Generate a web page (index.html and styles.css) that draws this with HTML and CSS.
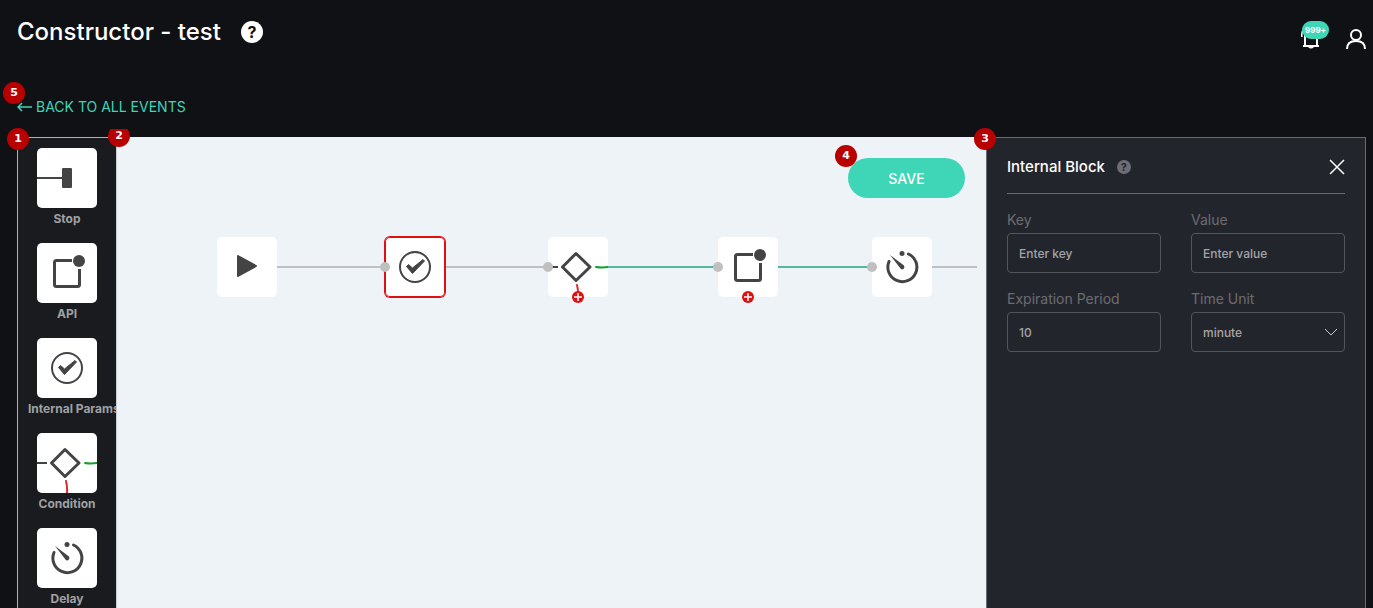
FILE: index.html
```
<!DOCTYPE html>
<html lang="en">
<head>
  <meta charset="UTF-8">
  <title>Constructor - test</title>
  <meta name="viewport" content="width=device-width, initial-scale=1">
  <link rel="stylesheet" href="styles.css">
</head>
<body>
  <!-- Block icons, shared by the palette and the canvas -->
  <svg class="sprite" aria-hidden="true">
    <symbol id="icon-stop" viewBox="0 0 60 60">
      <path d="M0 30h26" stroke="#444" stroke-width="2"/>
      <rect x="25" y="20" width="10" height="20" rx="1" fill="#444"/>
    </symbol>
    <symbol id="icon-play" viewBox="0 0 60 60">
      <path d="M21 19L39 29L21 39Z" fill="#444" stroke="#444" stroke-width="2" stroke-linejoin="round"/>
    </symbol>
    <symbol id="icon-api" viewBox="0 0 60 60">
      <path d="M35 17.500H19.500Q17.500 17.500 17.500 19.500V41.500Q17.500 43.500 19.500 43.500H40.500Q42.500 43.500 42.500 41.500V26" fill="none" stroke="#444" stroke-width="3"/>
      <circle cx="42" cy="18" r="6" fill="#444"/>
    </symbol>
    <symbol id="icon-check" viewBox="0 0 60 60">
      <circle cx="30" cy="30" r="15" fill="none" stroke="#444" stroke-width="2"/>
      <path d="M21.500 29.500L23.500 27.500L27.500 31L38 22.500L39.500 24L27.500 36.500Z" fill="#444" stroke="#444" stroke-linejoin="round"/>
    </symbol>
    <symbol id="icon-condition" viewBox="0 0 60 60">
      <path d="M0 30h10" stroke="#444" stroke-width="2"/>
      <path d="M28 16.500L42 30L28 43.500L14.500 30Z" fill="none" stroke="#444" stroke-width="3" stroke-linejoin="round"/>
      <path d="M48 30Q54 31 60 30" fill="none" stroke="#189f2b" stroke-width="2" stroke-linecap="round"/>
      <path d="M29 48Q30.500 54 30 60" fill="none" stroke="#dc2b2b" stroke-width="2" stroke-linecap="round"/>
    </symbol>
    <symbol id="icon-delay" viewBox="0 0 60 60">
      <path d="M17 24.500A14.500 14.500 0 1 0 36.500 17" fill="none" stroke="#444" stroke-width="3" stroke-linecap="round"/>
      <circle cx="30" cy="16.500" r="2.500" fill="#444"/>
      <path d="M18 18L32 28.500Q33 30.500 31.500 32Q30 33 28.500 31.500Z" fill="#444"/>
    </symbol>
  </svg>

  <header class="header">
    <h1 class="title">Constructor - test</h1>
    <button class="help" aria-label="Help">?</button>
    <div class="header-actions">
      <button class="icon-button bell" aria-label="Notifications">
        <svg width="22" height="26" viewBox="0 0 22 26" fill="none" stroke="#fff" stroke-width="2">
          <path d="M5 21V9Q5 2 11 2T17 9V21M3 22H19"/>
          <path d="M2 13Q1 8 4 5" stroke-width="1.500"/>
          <path d="M8 23Q11 26 14 23Z" fill="#fff" stroke="none"/>
        </svg>
        <span class="bell-count">999+</span>
      </button>
      <button class="icon-button" aria-label="Account">
        <svg width="22" height="22" viewBox="0 0 22 22" fill="none" stroke="#fff" stroke-width="2">
          <circle cx="11" cy="7" r="5"/>
          <path d="M2 21Q2 13 11 13T20 21"/>
        </svg>
      </button>
    </div>
  </header>

  <nav class="back">
    <a class="back-link" href="#">
      <svg width="15" height="10" viewBox="0 0 15 10" fill="none" stroke="currentColor">
        <path d="M15 5H1M5 1L1 5L5 9" stroke-width="1.500"/>
      </svg>
      BACK TO ALL EVENTS
    </a>
    <span class="marker marker-back">5</span>
  </nav>

  <main class="workspace">
    <aside class="palette">
      <span class="marker marker-palette">1</span>
      <ul class="palette-list">
        <li class="palette-item"><svg class="tile"><use href="#icon-stop"/></svg><span>Stop</span></li>
        <li class="palette-item"><svg class="tile"><use href="#icon-api"/></svg><span>API</span></li>
        <li class="palette-item"><svg class="tile"><use href="#icon-check"/></svg><span>Internal Params</span></li>
        <li class="palette-item"><svg class="tile"><use href="#icon-condition"/></svg><span>Condition</span></li>
        <li class="palette-item"><svg class="tile"><use href="#icon-delay"/></svg><span>Delay</span></li>
      </ul>
    </aside>

    <section class="canvas">
      <span class="marker marker-canvas">2</span>
      <div class="toolbar">
        <span class="marker marker-save">4</span>
        <button class="save">SAVE</button>
      </div>

      <div class="edge edge-start"></div>
      <div class="edge edge-check"></div>
      <div class="edge edge-condition"></div>
      <div class="edge edge-api"></div>
      <div class="edge edge-delay"></div>

      <div class="node node-start"><svg class="tile"><use href="#icon-play"/></svg></div>
      <div class="node node-check"><svg class="tile selected"><use href="#icon-check"/></svg><i class="port"></i></div>
      <div class="node node-condition"><svg class="tile"><use href="#icon-condition"/></svg><i class="port"></i>
        <button class="add" aria-label="Add branch"><svg width="12" height="12" viewBox="0 0 12 12"><path d="M6 2v8M2 6h8" stroke="#fff" stroke-width="1.500"/></svg></button>
      </div>
      <div class="node node-api"><svg class="tile"><use href="#icon-api"/></svg><i class="port"></i>
        <button class="add" aria-label="Add branch"><svg width="12" height="12" viewBox="0 0 12 12"><path d="M6 2v8M2 6h8" stroke="#fff" stroke-width="1.500"/></svg></button>
      </div>
      <div class="node node-delay"><svg class="tile"><use href="#icon-delay"/></svg><i class="port"></i></div>
    </section>

    <aside class="panel">
      <span class="marker marker-panel">3</span>
      <div class="panel-head">
        <h2 class="panel-title">Internal Block</h2>
        <button class="help help-small" aria-label="About this block">?</button>
        <button class="icon-button close" aria-label="Close">
          <svg width="16" height="16" viewBox="0 0 16 16" stroke="#fff" stroke-width="1.500"><path d="M1 1L15 15M15 1L1 15"/></svg>
        </button>
      </div>
      <form class="fields">
        <div class="field">
          <label for="key">Key</label>
          <input id="key" type="text" placeholder="Enter key">
        </div>
        <div class="field">
          <label for="value">Value</label>
          <input id="value" type="text" placeholder="Enter value">
        </div>
        <div class="field">
          <label for="period">Expiration Period</label>
          <input id="period" type="text" value="10">
        </div>
        <div class="field">
          <label for="unit">Time Unit</label>
          <div class="select">
            <select id="unit">
              <option>minute</option>
              <option>hour</option>
              <option>day</option>
            </select>
            <svg class="chevron" width="14" height="8" viewBox="0 0 14 8" fill="none" stroke="#ccc"><path d="M1 1L7 7L13 1"/></svg>
          </div>
        </div>
      </form>
    </aside>
  </main>
</body>
</html>
```
FILE: styles.css
```
:root {
  --bg: #101115;
  --palette-bg: #1a1b1f;
  --panel-bg: #23252c;
  --canvas-bg: #eef3f8;
  --accent: #3fd6b8;
  --line: #c0c0c0;
  --red: #e01010;
  --muted: #6b6c70;
}
* {
  box-sizing: border-box;
}
body {
  margin: 0;
  min-height: 100vh;
  display: flex;
  flex-direction: column;
  background: var(--bg);
  color: #fff;
  font-family: Inter, "Liberation Sans", sans-serif;
}
button, input, select {
  font-family: inherit;
}
button {
  padding: 0;
  border: none;
  cursor: pointer;
}
.sprite {
  position: absolute;
  width: 0;
  height: 0;
}

/* Header */
.header {
  display: flex;
  align-items: center;
  height: 64px;
  padding: 0 6px 0 17px;
}
.title {
  margin: 0;
  font-size: 24px;
  line-height: 32px;
  font-weight: 500;
}
.help {
  width: 22px;
  height: 22px;
  margin-left: 20px;
  border-radius: 50%;
  background: #fff;
  color: var(--bg);
  font-size: 16px;
  line-height: 22px;
  font-weight: 700;
}
.help-small {
  width: 14px;
  height: 14px;
  margin-left: 12px;
  background: #6d6e73;
  color: var(--panel-bg);
  font-size: 11px;
  line-height: 14px;
}
.header-actions {
  display: flex;
  align-items: flex-end;
  gap: 23px;
  margin-left: auto;
  padding-top: 10px;
}
.icon-button {
  position: relative;
  background: none;
}
.icon-button svg {
  display: block;
}
.bell-count {
  position: absolute;
  top: -3px;
  left: 2px;
  width: 27px;
  height: 18px;
  border-radius: 9px;
  background: var(--accent);
  color: #fff;
  font-size: 8px;
  line-height: 18px;
  font-weight: 700;
}

/* Back link */
.back {
  position: relative;
  padding: 32px 17px 20px;
}
.back-link {
  display: inline-flex;
  align-items: center;
  gap: 4px;
  color: var(--accent);
  font-size: 14px;
  line-height: 20px;
  text-decoration: none;
}

/* Numbered markers */
.marker {
  position: absolute;
  z-index: 2;
  width: 22px;
  height: 22px;
  border-radius: 50%;
  background: #b90000;
  color: #fff;
  font: bold 11px/22px "DejaVu Sans", sans-serif;
  text-align: center;
}
.marker-back {
  top: 18px;
  left: 3px;
}
.marker-palette {
  top: -10px;
  left: -11px;
}
.marker-canvas {
  top: -12px;
  left: -9px;
  clip-path: inset(4px 0 0 0);
}
.marker-panel {
  top: -10px;
  left: -13px;
}
.marker-save {
  top: -13px;
  left: -13px;
}

/* Workspace */
.workspace {
  flex: 1;
  display: flex;
  margin: 0 7px 0 17px;
}
.palette {
  position: relative;
  width: 99px;
  padding-top: 10px;
  border-top: 1px solid #aeb0b4;
  border-left: 1px solid #aeb0b4;
  background: var(--palette-bg);
}
.palette-list {
  display: flex;
  flex-direction: column;
  gap: 15px;
  margin: 0;
  padding: 0 10px;
  overflow: hidden;
  list-style: none;
}
.palette-item {
  display: flex;
  flex-direction: column;
  gap: 2px;
  width: 78px;
  color: #a0a1a4;
  font-size: 12px;
  line-height: 18px;
  font-weight: 700;
  text-align: center;
  white-space: nowrap;
}
.tile {
  display: block;
  width: 60px;
  height: 60px;
  border-radius: 5px;
  background: #fff;
}
.palette-item .tile {
  align-self: center;
}

/* Canvas */
.canvas {
  position: relative;
  flex: 1;
  border-left: 1px solid #c9ccd0;
  background: var(--canvas-bg);
}
.toolbar {
  position: absolute;
  top: 21px;
  right: 21px;
}
.save {
  width: 117px;
  height: 40px;
  border-radius: 20px;
  background: var(--accent);
  color: #fff;
  font-size: 14px;
  font-weight: 500;
}
.node {
  position: absolute;
  top: 100px;
}
.selected {
  box-shadow: 0 0 0 1px var(--red), inset 0 0 0 1px var(--red);
}
.node-start { left: 100px; }
.node-check { left: 268px; }
.node-condition { left: 431px; }
.node-api { left: 601px; }
.node-delay { left: 755px; }
.port {
  position: absolute;
  top: 25px;
  left: -5px;
  width: 10px;
  height: 10px;
  border-radius: 50%;
  background: var(--line);
}
.add {
  position: absolute;
  top: 54px;
  left: 24px;
  width: 12px;
  height: 12px;
  border-radius: 50%;
  background: var(--red);
}
.add svg {
  display: block;
}
.edge {
  position: absolute;
  top: 129px;
  height: 2px;
  background: var(--line);
}
.edge-start { left: 160px; width: 108px; }
.edge-check { left: 328px; width: 103px; }
.edge-condition { left: 491px; width: 110px; background: #56b89c; }
.edge-api { left: 661px; width: 94px; background: #56b89c; }
.edge-delay { left: 815px; width: 45px; }

/* Settings panel */
.panel {
  position: relative;
  width: 380px;
  padding: 0 20px;
  border: 1px solid #6a6b70;
  border-bottom: none;
  background: var(--panel-bg);
}
.panel-head {
  display: flex;
  align-items: center;
  height: 56px;
  padding-top: 3px;
  border-bottom: 1px solid #6a6b70;
}
.panel-title {
  margin: 0;
  font-size: 15px;
  line-height: 20px;
  font-weight: 500;
}
.close {
  margin-left: auto;
}
.fields {
  display: grid;
  grid-template-columns: 1fr 1fr;
  gap: 16px 30px;
  padding-top: 16px;
}
.field label {
  display: block;
  margin-bottom: 3px;
  color: var(--muted);
  font-size: 14px;
  line-height: 20px;
}
.field input,
.field select {
  display: block;
  width: 100%;
  height: 40px;
  padding: 0 11px;
  border: 1px solid #54555b;
  border-radius: 4px;
  background: transparent;
  color: #a3a4a7;
  font-size: 12px;
  font-weight: 500;
  appearance: none;
}
.field input::placeholder {
  color: #a3a4a7;
}
.select {
  position: relative;
}
.chevron {
  position: absolute;
  top: 16px;
  right: 7px;
  pointer-events: none;
}
```
